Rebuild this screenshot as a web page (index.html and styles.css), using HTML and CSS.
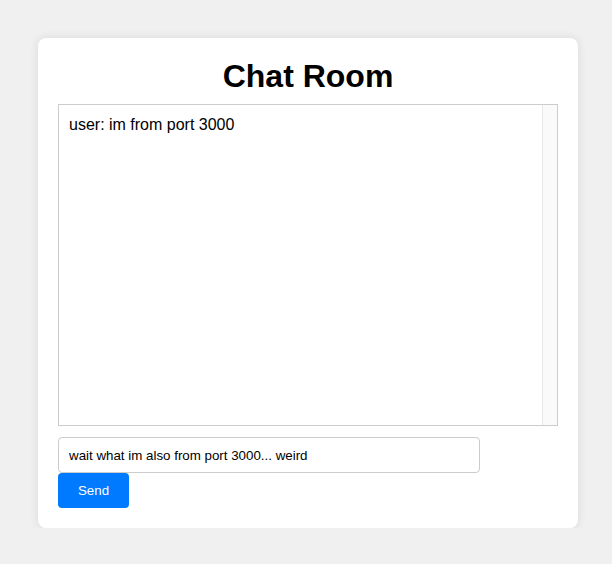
FILE: index.html
```html
<!DOCTYPE html>
<html>
<head>
<meta charset="utf-8">
<title>Chat Room</title>
<link rel="stylesheet" href="styles.css">
</head>
<body>
<div class="chat-container">
  <h1 class="title">Chat Room</h1>
  <div class="messages">
    <div class="message">user: im from port 3000</div>
  </div>
  <input class="message-input" type="text" value="wait what im also from port 3000... weird">
  <button class="send-btn">Send</button>
</div>
</body>
</html>
```
FILE: styles.css
```css
html, body {
  margin: 0;
  padding: 0;
  background: #f0f0f0;
  font-family: "Liberation Sans", Arial, sans-serif;
}
body {
  padding: 38px 0 0 38px;
}
.chat-container {
  width: 500px;
  padding: 20px;
  background: #fff;
  border-radius: 8px;
  box-shadow: 0 0 10px rgba(0, 0, 0, 0.1);
}
.title {
  margin: 0 0 9px;
  text-align: center;
  font-size: 32px;
  font-weight: bold;
  color: #000;
}
.messages {
  height: 300px;
  padding: 11px 25px 9px 10px;
  border: 1px solid #ccc;
  overflow: hidden;
  font-size: 16px;
  color: #000;
  background: linear-gradient(to left, #fafafa 0, #fafafa 14px, #e8e8e8 14px, #e8e8e8 15px, #fff 15px);
}
.message {
  margin: 0;
}
.message-input {
  display: block;
  box-sizing: border-box;
  width: 422px;
  height: 36px;
  margin-top: 11px;
  padding: 10px;
  border: 1px solid #ccc;
  border-radius: 4px;
  font-family: "Liberation Sans", Arial, sans-serif;
  font-size: 13.33px;
  color: #000;
  outline: none;
}
.send-btn {
  display: block;
  width: 71px;
  height: 35px;
  padding: 0;
  border: none;
  border-radius: 4px;
  background: #007bff;
  color: #fff;
  font-family: "Liberation Sans", Arial, sans-serif;
  font-size: 13.33px;
  cursor: pointer;
}
```
